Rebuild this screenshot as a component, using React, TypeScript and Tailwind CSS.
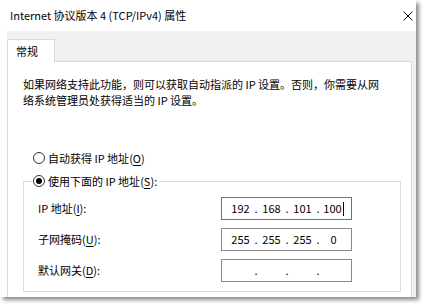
const FONT = "font-['Noto_Sans_CJK_SC','Noto_Sans',sans-serif]"

function Radio({ checked }: { checked?: boolean }) {
  return (
    <svg width="12" height="12" viewBox="0 0 12 12" className="shrink-0">
      <circle cx="6" cy="6" r="5.5" fill="#fff" stroke="#333" strokeWidth="1" />
      {checked && <circle cx="6" cy="6" r="3" fill="#000" />}
    </svg>
  )
}

function Key({ k }: { k: string }) {
  return (
    <>
      (<span className="underline underline-offset-[2px]">{k}</span>)
    </>
  )
}

function IpBox({ parts, focused }: { parts: string[]; focused?: boolean }) {
  return (
    <div
      className={
        'w-[131px] h-[23px] border bg-white flex items-center pl-[6px] ' +
        (focused ? 'border-[#6f6f6f]' : 'border-[#8a8a8a]')
      }
    >
      {parts.map((p, i) => (
        <div key={i} className="flex items-center">
          {i > 0 && <span className="w-[6px] text-center">.</span>}
          <span className="w-[25px] flex items-center justify-center">
            {p}
            {focused && i === 3 && <span className="inline-block w-px h-[14px] bg-black ml-[1px]" />}
          </span>
        </div>
      ))}
    </div>
  )
}

export default function App() {
  return (
    <div className={`w-[429px] h-[305px] bg-white overflow-hidden text-[11px] text-black ${FONT}`}>
      <div className="w-[416px] h-[297px] flex flex-col bg-white shadow-[3px_3px_4px_rgba(0,0,0,0.45)]">
        {/* title bar */}
        <div className="h-[31px] shrink-0 flex items-center justify-between pl-[10px] pr-[3px]">
          <span className="leading-none">Internet 协议版本 4 (TCP/IPv4) 属性</span>
          <svg width="10" height="10" viewBox="0 0 10 10">
            <path d="M0.5 0.5 L9.5 9.5 M9.5 0.5 L0.5 9.5" stroke="#000" strokeWidth="1" />
          </svg>
        </div>

        <div className="flex-1 flex min-h-0">
          <div className="w-[7px] bg-white" />
          <div className="flex-1 bg-[#f0f0f0] flex flex-col pr-[4px] min-h-0">
            {/* tab strip */}
            <div className="h-[30px] shrink-0 flex items-end">
              <div className="relative z-10 -mb-px w-[48px] h-[23px] bg-white border border-b-0 border-[#d9d9d9] pl-[8px] flex items-center leading-none">
                常规
              </div>
            </div>

            {/* tab page */}
            <div className="flex-1 bg-white border-x border-t border-[#d9d9d9] pl-[15px] pt-[14px]">
              <p className="leading-[16px]">
                <span className="block">如果网络支持此功能，则可以获取自动指派的 IP 设置。否则，你需要从网</span>
                <span className="block">络系统管理员处获得适当的 IP 设置。</span>
              </p>

              <div className="mt-[42px] ml-[10px] h-[16px] flex items-center gap-[3px]">
                <Radio />
                <span className="leading-[16px]">
                  自动获得 IP 地址<Key k="O" />
                </span>
              </div>

              <fieldset className="mt-[7px] w-[378px] border border-[#dcdcdc] pl-[14px] pt-[8px] pb-[9px]">
                <legend className="-ml-[6px] pl-[1px] pr-[2px] h-[16px] flex items-center gap-[3px]">
                  <Radio checked />
                  <span className="leading-[16px]">
                    使用下面的 IP 地址<Key k="S" />:
                  </span>
                </legend>
                <div className="flex flex-col gap-[8px]">
                  <div className="flex items-center">
                    <span className="w-[183px]">
                      IP 地址<Key k="I" />:
                    </span>
                    <IpBox parts={['192', '168', '101', '100']} focused />
                  </div>
                  <div className="flex items-center">
                    <span className="w-[183px]">
                      子网掩码<Key k="U" />:
                    </span>
                    <IpBox parts={['255', '255', '255', '0']} />
                  </div>
                  <div className="flex items-center">
                    <span className="w-[183px]">
                      默认网关<Key k="D" />:
                    </span>
                    <IpBox parts={['', '', '', '']} />
                  </div>
                </div>
              </fieldset>
            </div>
          </div>
        </div>
      </div>
    </div>
  )
}
